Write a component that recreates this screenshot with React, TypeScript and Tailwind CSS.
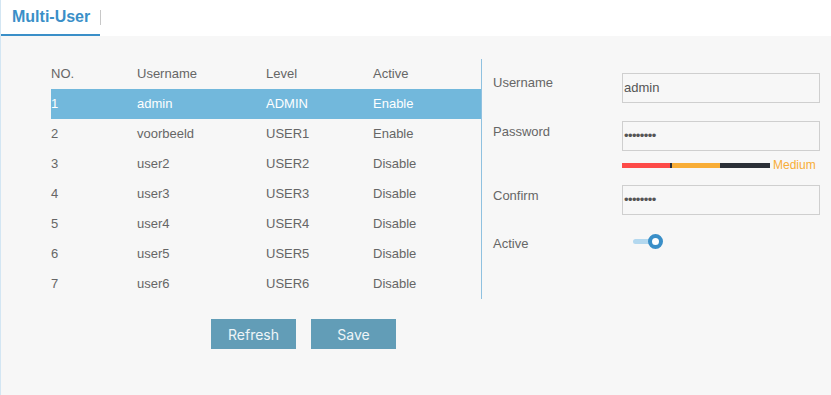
import { useState } from 'react'

const users = [
  { no: 1, name: 'admin', level: 'ADMIN', active: 'Enable' },
  { no: 2, name: 'voorbeeld', level: 'USER1', active: 'Enable' },
  { no: 3, name: 'user2', level: 'USER2', active: 'Disable' },
  { no: 4, name: 'user3', level: 'USER3', active: 'Disable' },
  { no: 5, name: 'user4', level: 'USER4', active: 'Disable' },
  { no: 6, name: 'user5', level: 'USER5', active: 'Disable' },
  { no: 7, name: 'user6', level: 'USER6', active: 'Disable' },
]

export default function App() {
  const [selected, setSelected] = useState(1)
  const [active, setActive] = useState(true)

  return (
    <div
      className="w-[831px] h-[395px] flex flex-col border-l border-[#d3e6f3] bg-white text-[13px] text-[#666]"
      style={{ fontFamily: '"Liberation Sans", Arial, sans-serif' }}
    >
      <div className="h-[36px] flex items-end bg-white">
        <div className="w-[99px] h-[36px] flex items-center pl-[11px] border-b-2 border-[#3a8fc8]">
          <span className="text-[16px] font-bold text-[#3a8fc8]">Multi-User</span>
        </div>
        <div className="h-[36px] flex items-center pb-[2px]">
          <span className="w-px h-[15px] bg-[#c8c8c8]" />
        </div>
      </div>

      <div className="flex-1 bg-[#f7f7f7] pl-[50px] pt-[23px]">
        <div className="flex">
          <div className="w-[430px]">
            <div className="grid grid-cols-[86px_129px_107px_1fr] h-[30px] items-center">
              <span>NO.</span>
              <span>Username</span>
              <span>Level</span>
              <span>Active</span>
            </div>
            {users.map((u) => (
              <div
                key={u.no}
                onClick={() => setSelected(u.no)}
                className={
                  'grid grid-cols-[86px_129px_107px_1fr] h-[30px] items-center cursor-pointer ' +
                  (selected === u.no ? 'bg-[#72b8dc] text-white' : '')
                }
              >
                <span>{u.no}</span>
                <span>{u.name}</span>
                <span>{u.level}</span>
                <span>{u.active}</span>
              </div>
            ))}
            <div className="flex gap-[15px] pl-[160px] pt-[20px]">
              <button className="w-[85px] h-[30px] bg-[#629db7] text-[14px] text-[#eef5f8]" style={{ fontFamily: 'Inter, sans-serif' }}>
                Refresh
              </button>
              <button className="w-[85px] h-[30px] bg-[#629db7] text-[14px] text-[#eef5f8]" style={{ fontFamily: 'Inter, sans-serif' }}>
                Save
              </button>
            </div>
          </div>

          <div className="w-px h-[240px] bg-[#8fc1e0]" />

          <div className="pl-[11px] pt-[14px] w-[339px]">
            <div className="flex h-[30px]">
              <span className="w-[129px]">Username</span>
              <div className="w-[198px] h-[30px] border border-[#cfcfcf] flex items-center pl-px text-[#555]">admin</div>
            </div>
            <div className="flex h-[30px] mt-[18px]">
              <span className="w-[129px] pt-[1px]">Password</span>
              <div className="w-[198px] h-[30px] border border-[#cfcfcf] flex items-center pl-px text-[#555] text-[13px] tracking-[-0.6px]">
                ••••••••
              </div>
            </div>
            <div className="flex items-center h-[12px] mt-[8px] pl-[129px]">
              <div className="flex h-[5px] w-[148px]">
                <span className="w-[48px] bg-[#fd4a48]" />
                <span className="w-[2px] bg-[#2a2f36]" />
                <span className="w-[48px] bg-[#f8ad36]" />
                <span className="w-[50px] bg-[#2a2f36]" />
              </div>
              <span className="ml-[3px] text-[12px] text-[#f8ad36]">Medium</span>
            </div>
            <div className="flex h-[30px] mt-[14px]">
              <span className="w-[129px] pt-[1px]">Confirm</span>
              <div className="w-[198px] h-[30px] border border-[#cfcfcf] flex items-center pl-px text-[#555] text-[13px] tracking-[-0.6px]">
                ••••••••
              </div>
            </div>
            <div className="flex h-[30px] mt-[14px] items-center">
              <span className="w-[129px]">Active</span>
              <button
                onClick={() => setActive(!active)}
                className="relative w-[30px] h-[16px] ml-[11px] -mt-[5px]"
              >
                <span className="absolute left-0 top-[5px] w-[22px] h-[5px] rounded-full bg-[#b3d8ef]" />
                <span className="absolute right-0 top-0 w-[15px] h-[15px] rounded-full border-[4px] border-[#3a8fc8] bg-white" />
              </button>
            </div>
          </div>
        </div>
      </div>
    </div>
  )
}
